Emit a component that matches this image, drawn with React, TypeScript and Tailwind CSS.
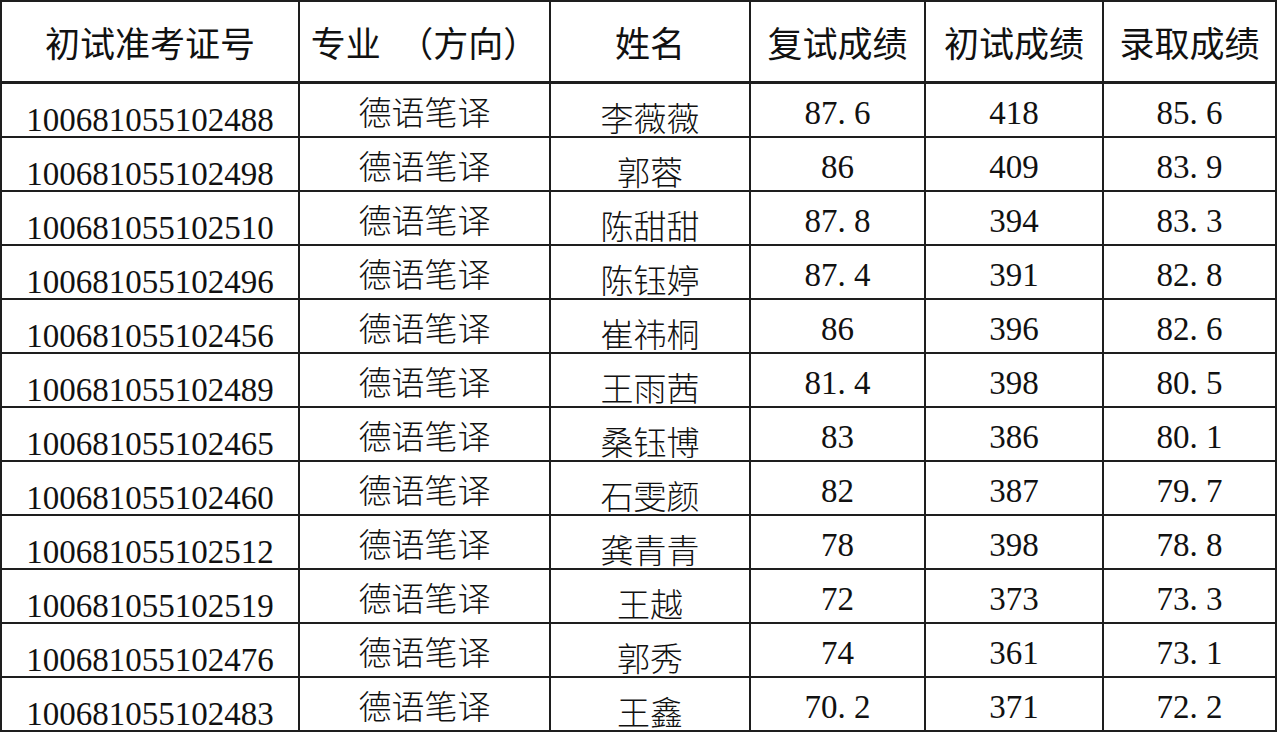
const rows = [
  ['100681055102488', '李薇薇', '87.6', '418', '85.6'],
  ['100681055102498', '郭蓉', '86', '409', '83.9'],
  ['100681055102510', '陈甜甜', '87.8', '394', '83.3'],
  ['100681055102496', '陈钰婷', '87.4', '391', '82.8'],
  ['100681055102456', '崔祎桐', '86', '396', '82.6'],
  ['100681055102489', '王雨茜', '81.4', '398', '80.5'],
  ['100681055102465', '桑钰博', '83', '386', '80.1'],
  ['100681055102460', '石雯颜', '82', '387', '79.7'],
  ['100681055102512', '龚青青', '78', '398', '78.8'],
  ['100681055102519', '王越', '72', '373', '73.3'],
  ['100681055102476', '郭秀', '74', '361', '73.1'],
  ['100681055102483', '王鑫', '70.2', '371', '72.2'],
]

const headers = ['初试准考证号', '专业　（方向）', '姓名', '复试成绩', '初试成绩', '录取成绩']

const serif = "font-['Liberation_Serif','Noto_Sans_CJK_SC',serif]"
const cjk = "font-['Noto_Sans_CJK_SC',sans-serif]"

// SimSun-style score: the period takes a full half-width cell
function Score({ value }: { value: string }) {
  const [a, b] = value.split('.')
  return (
    <span className="whitespace-nowrap">
      {a}
      {b !== undefined && (
        <>
          <span className="inline-block w-[16.5px] text-left">.</span>
          {b}
        </>
      )}
    </span>
  )
}

export default function App() {
  return (
    <div className="min-h-[732px] w-[1280px] bg-white text-[#111]">
      <div className="grid w-[1277px] grid-cols-[298px_251px_200px_175px_178px_173px] border-l-2 border-t-2 border-[#1e1e1e]">
        {/* header */}
        {headers.map((h) => (
          <div
            key={h}
            className={`flex h-[82px] justify-center border-b-[3px] border-r-2 border-[#1e1e1e] pt-[22px] text-[35px] leading-none font-normal whitespace-nowrap ${cjk}`}
          >
            {h}
          </div>
        ))}

        {rows.map((r) => (
          <div key={r[0]} className="contents">
            <div className={`flex h-[54px] justify-center border-b-2 border-r-2 border-[#1e1e1e] pt-[20px] text-[33px] leading-none ${serif}`}>
              {r[0]}
            </div>
            <div className={`flex h-[54px] justify-center border-b-2 border-r-2 border-[#1e1e1e] pt-[11px] text-[33px] leading-none font-light ${cjk}`}>
              德语笔译
            </div>
            <div className={`flex h-[54px] justify-center border-b-2 border-r-2 border-[#1e1e1e] pt-[17px] text-[33px] leading-none font-light ${cjk}`}>
              {r[1]}
            </div>
            {[r[2], r[3], r[4]].map((v, i) => (
              <div
                key={i}
                className={`flex h-[54px] justify-center border-b-2 border-r-2 border-[#1e1e1e] pt-[13px] text-[33px] leading-none ${serif}`}
              >
                <Score value={v} />
              </div>
            ))}
          </div>
        ))}
      </div>
    </div>
  )
}
